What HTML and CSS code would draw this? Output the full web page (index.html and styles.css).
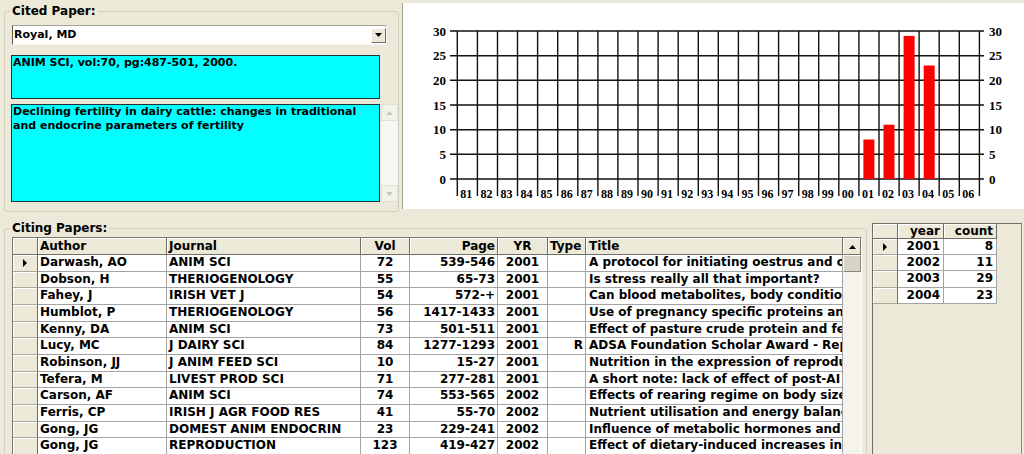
FILE: index.html
```html
<!DOCTYPE html>
<html>
<head>
<meta charset="utf-8">
<title>Citation Browser</title>
<link rel="stylesheet" href="styles.css">
</head>
<body>
<div class="top">
  <fieldset class="group cited">
    <legend>Cited Paper:</legend>
    <div class="combo">
      <span class="combo-text">Royal, MD</span>
      <span class="combo-btn"><svg width="7" height="4" viewBox="0 0 7 4"><polygon points="0,0 7,0 3.5,4" fill="#000"/></svg></span>
    </div>
    <div class="memo source">ANIM SCI, vol:70, pg:487-501, 2000.</div>
    <div class="memo-wrap">
      <div class="memo title">Declining fertility in dairy cattle: changes in traditional and endocrine parameters of fertility</div>
      <div class="vscroll off">
        <span class="sbtn"><svg width="7" height="4" viewBox="0 0 7 4"><polygon points="0,4 7,4 3.5,0" fill="#C9C7BA"/></svg></span>
        <span class="strack"></span>
        <span class="sbtn"><svg width="7" height="4" viewBox="0 0 7 4"><polygon points="0,0 7,0 3.5,4" fill="#C9C7BA"/></svg></span>
      </div>
    </div>
  </fieldset>
  <div class="chart">
    <svg width="621" height="206" viewBox="403 3 621 206" font-family="'Liberation Serif', serif" font-weight="bold" font-size="12">
      <path d="M450 179H984M450 154.3H984M450 129.7H984M450 105H984M450 80.3H984M450 55.7H984M450 31H984" stroke="#111" stroke-width="1.4" fill="none"/>
      <path d="M457.3 31V196M477.4 31V196M497.5 31V196M517.5 31V196M537.6 31V196M557.7 31V196M577.8 31V196M597.9 31V196M617.9 31V196M638 31V196M658.1 31V196M678.2 31V196M698.3 31V196M718.3 31V196M738.4 31V196M758.5 31V196M778.6 31V196M798.7 31V196M818.7 31V196M838.8 31V196M858.9 31V196M879 31V196M899.1 31V196M919.1 31V196M939.2 31V196M959.3 31V196M979.4 31V196" stroke="#111" stroke-width="1.4" fill="none"/>
      <g fill="#FF0000">
        <rect x="863.4" y="139.5" width="11" height="39.5"/>
        <rect x="883.5" y="124.7" width="11" height="54.3"/>
        <rect x="903.6" y="35.9" width="11" height="143.1"/>
        <rect x="923.7" y="65.5" width="11" height="113.5"/>
      </g>
      <g text-anchor="end" fill="#000" font-size="13">
        <text x="446" y="183.7">0</text>
        <text x="446" y="159">5</text>
        <text x="446" y="134.4">10</text>
        <text x="446" y="109.7">15</text>
        <text x="446" y="85">20</text>
        <text x="446" y="60.4">25</text>
        <text x="446" y="35.7">30</text>
      </g>
      <g text-anchor="start" fill="#000" font-size="13">
        <text x="989" y="183.7">0</text>
        <text x="989" y="159">5</text>
        <text x="989" y="134.4">10</text>
        <text x="989" y="109.7">15</text>
        <text x="989" y="85">20</text>
        <text x="989" y="60.4">25</text>
        <text x="989" y="35.7">30</text>
      </g>
      <g text-anchor="middle" fill="#000">
        <text x="466.3" y="197.5">81</text>
        <text x="486.4" y="197.5">82</text>
        <text x="506.5" y="197.5">83</text>
        <text x="526.5" y="197.5">84</text>
        <text x="546.6" y="197.5">85</text>
        <text x="566.7" y="197.5">86</text>
        <text x="586.8" y="197.5">87</text>
        <text x="606.9" y="197.5">88</text>
        <text x="626.9" y="197.5">89</text>
        <text x="647" y="197.5">90</text>
        <text x="667.1" y="197.5">91</text>
        <text x="687.2" y="197.5">92</text>
        <text x="707.3" y="197.5">93</text>
        <text x="727.3" y="197.5">94</text>
        <text x="747.4" y="197.5">95</text>
        <text x="767.5" y="197.5">96</text>
        <text x="787.6" y="197.5">97</text>
        <text x="807.7" y="197.5">98</text>
        <text x="827.7" y="197.5">99</text>
        <text x="847.8" y="197.5">00</text>
        <text x="867.9" y="197.5">01</text>
        <text x="888" y="197.5">02</text>
        <text x="908.1" y="197.5">03</text>
        <text x="928.1" y="197.5">04</text>
        <text x="948.2" y="197.5">05</text>
        <text x="968.3" y="197.5">06</text>
      </g>
    </svg>
  </div>
</div>

<div class="bottom">
  <fieldset class="group citing">
    <legend>Citing Papers:</legend>
    <div class="grid">
      <div class="cells">
        <div class="h"></div><div class="h">Author</div><div class="h">Journal</div><div class="h ctr">Vol</div><div class="h r">Page</div><div class="h ctr">YR</div><div class="h">Type</div><div class="h t">Title</div>

        <div class="ind"><span class="arrow"></span></div><div class="c">Darwash, AO</div><div class="c">ANIM SCI</div><div class="c ctr">72</div><div class="c r">539-546</div><div class="c ctr">2001</div><div class="c r"></div><div class="c t">A protocol for initiating oestrus and ovulation early post partum in dairy cows</div>
        <div class="ind"></div><div class="c">Dobson, H</div><div class="c">THERIOGENOLOGY</div><div class="c ctr">55</div><div class="c r">65-73</div><div class="c ctr">2001</div><div class="c r"></div><div class="c t">Is stress really all that important?</div>
        <div class="ind"></div><div class="c">Fahey, J</div><div class="c">IRISH VET J</div><div class="c ctr">54</div><div class="c r">572-+</div><div class="c ctr">2001</div><div class="c r"></div><div class="c t">Can blood metabolites, body condition score and milk yield predict fertility?</div>
        <div class="ind"></div><div class="c">Humblot, P</div><div class="c">THERIOGENOLOGY</div><div class="c ctr">56</div><div class="c r">1417-1433</div><div class="c ctr">2001</div><div class="c r"></div><div class="c t">Use of pregnancy specific proteins and progesterone assays</div>
        <div class="ind"></div><div class="c">Kenny, DA</div><div class="c">ANIM SCI</div><div class="c ctr">73</div><div class="c r">501-511</div><div class="c ctr">2001</div><div class="c r"></div><div class="c t">Effect of pasture crude protein and fermentable energy supply</div>
        <div class="ind"></div><div class="c">Lucy, MC</div><div class="c">J DAIRY SCI</div><div class="c ctr">84</div><div class="c r">1277-1293</div><div class="c ctr">2001</div><div class="c r">R</div><div class="c t">ADSA Foundation Scholar Award - Reproductive loss in high-producing dairy cattle</div>
        <div class="ind"></div><div class="c">Robinson, JJ</div><div class="c">J ANIM FEED SCI</div><div class="c ctr">10</div><div class="c r">15-27</div><div class="c ctr">2001</div><div class="c r"></div><div class="c t">Nutrition in the expression of reproductive performance</div>
        <div class="ind"></div><div class="c">Tefera, M</div><div class="c">LIVEST PROD SCI</div><div class="c ctr">71</div><div class="c r">277-281</div><div class="c ctr">2001</div><div class="c r"></div><div class="c t">A short note: lack of effect of post-AI progesterone</div>
        <div class="ind"></div><div class="c">Carson, AF</div><div class="c">ANIM SCI</div><div class="c ctr">74</div><div class="c r">553-565</div><div class="c ctr">2002</div><div class="c r"></div><div class="c t">Effects of rearing regime on body size and reproduction</div>
        <div class="ind"></div><div class="c">Ferris, CP</div><div class="c">IRISH J AGR FOOD RES</div><div class="c ctr">41</div><div class="c r">55-70</div><div class="c ctr">2002</div><div class="c r"></div><div class="c t">Nutrient utilisation and energy balance in dairy cows</div>
        <div class="ind"></div><div class="c">Gong, JG</div><div class="c">DOMEST ANIM ENDOCRIN</div><div class="c ctr">23</div><div class="c r">229-241</div><div class="c ctr">2002</div><div class="c r"></div><div class="c t">Influence of metabolic hormones and nutrition on ovarian follicle development</div>
        <div class="ind"></div><div class="c">Gong, JG</div><div class="c">REPRODUCTION</div><div class="c ctr">123</div><div class="c r">419-427</div><div class="c ctr">2002</div><div class="c r"></div><div class="c t">Effect of dietary-induced increases in circulating insulin</div>
      </div>
      <div class="vscroll gscroll">
        <span class="gbtn"><svg width="7" height="4" viewBox="0 0 7 4"><polygon points="0,4 7,4 3.5,0" fill="#000"/></svg></span>
        <span class="thumb"></span>
        <span class="strack"></span>
      </div>
    </div>
  </fieldset>

  <div class="mini">
    <div class="mini-cells">
      <div class="h"></div><div class="h r">year</div><div class="h r">count</div>
      <div class="ind"><span class="arrow"></span></div><div class="c r">2001</div><div class="c r">8</div>
      <div class="ind"></div><div class="c r">2002</div><div class="c r">11</div>
      <div class="ind"></div><div class="c r">2003</div><div class="c r">29</div>
      <div class="ind"></div><div class="c r">2004</div><div class="c r">23</div>
    </div>
  </div>
</div>
</body>
</html>
```

FILE: styles.css
```css
html, body {
  margin: 0;
  padding: 0;
}
body {
  width: 1024px;
  height: 454px;
  overflow: hidden;
  background: #ECE9D8;
  font-family: "DejaVu Sans", sans-serif;
  font-weight: bold;
  font-size: 12px;
  color: #000;
}

/* top area */
.top {
  display: flex;
  align-items: flex-start;
  height: 212px;
}

.group {
  box-sizing: border-box;
  min-width: 0;
  padding: 0 0 0 5px;
  border: 1px solid #D0D0BF;
  border-radius: 3px;
}
.group legend {
  padding: 0 2px;
  font-size: 12px;
  line-height: 17px;
}

.group.cited {
  margin: 3px 0 0 4px;
  width: 395px;
  height: 209px;
}

.combo {
  box-sizing: border-box;
  display: flex;
  align-items: center;
  margin: 5px 0 0 2px;
  width: 375px;
  height: 20px;
  background: #fff;
  border-style: solid;
  border-width: 1px;
  border-color: #A5A296 #F5F4EE #F5F4EE #5B5A52;
}
.combo-text {
  flex: 1;
  padding-left: 1px;
  font-size: 11px;
  line-height: 18px;
}
.combo-btn {
  box-sizing: border-box;
  display: flex;
  align-items: center;
  justify-content: center;
  width: 15px;
  height: 15px;
  background: #ECE9D8;
  border: 1px solid;
  border-color: #fff #716F64 #716F64 #fff;
}

.memo {
  box-sizing: border-box;
  background: #00FFFF;
  border: 1px solid #1E3434;
  padding: 0 1px;
  font-size: 11px;
  line-height: 14px;
  overflow: hidden;
}
.source {
  margin: 10px 0 0 1px;
  width: 369px;
  height: 44px;
}
.memo-wrap {
  display: flex;
  margin: 5px 0 0 1px;
  height: 98px;
}
.memo.title {
  width: 369px;
  height: 98px;
}

.vscroll {
  display: flex;
  flex-direction: column;
}
.vscroll.off {
  width: 17px;
  margin-left: 1px;
  background: #F7F6F2;
}
.sbtn {
  box-sizing: border-box;
  display: flex;
  align-items: center;
  justify-content: center;
  height: 17px;
  background: #F3F2EC;
  border: 1px solid #E2E0D4;
}
.strack {
  flex: 1;
}

.chart {
  box-sizing: border-box;
  margin: 3px 0 0 3px;
  width: 622px;
  height: 206px;
  background: #fff;
  border-left: 1px solid #A7A593;
}
.chart svg {
  display: block;
}

/* bottom area */
.bottom {
  display: flex;
  align-items: flex-start;
}
.group.citing {
  margin: 8px 0 0 4px;
  width: 863px;
  height: 250px;
}
.grid {
  box-sizing: border-box;
  display: flex;
  margin-left: 2px;
  width: 850px;
  border: 1px solid;
  border-color: #7A786C #fff #fff #7A786C;
  background: #fff;
}
.cells {
  display: grid;
  grid-template-columns: 25px 129px 194px 49px 88px 50px 38px 257px;
  grid-template-rows: 17px;
  grid-auto-rows: 16.67px;
}
.cells .c,
.mini-cells .c {
  background: #fff;
  border-right: 1px solid #A4A4A4;
  border-bottom: 1px solid #A4A4A4;
  padding: 0 2px;
  line-height: 15.67px;
  white-space: nowrap;
  overflow: hidden;
}
.h {
  background: #ECE9D8;
  border-right: 1px solid #716F64;
  border-bottom: 1px solid #716F64;
  box-shadow: inset 1px 1px 0 #fff;
  padding: 0 2px;
  line-height: 16px;
  white-space: nowrap;
  overflow: hidden;
}
.ind {
  display: flex;
  align-items: center;
  justify-content: center;
  background: #ECE9D8;
  border-right: 1px solid #716F64;
  border-bottom: 1px solid #ACA899;
  box-shadow: inset 1px 1px 0 #fff;
}
.arrow {
  width: 0;
  height: 0;
  border-left: 4px solid #000;
  border-top: 4px solid transparent;
  border-bottom: 4px solid transparent;
}
.r { text-align: right; }
.ctr { text-align: center; }
.cells .t { padding-left: 3px; }

.gscroll {
  width: 18px;
  background: #F4F3EE;
}
.gbtn {
  box-sizing: border-box;
  display: flex;
  align-items: center;
  justify-content: center;
  height: 17px;
  background: #ECE9D8;
  border: 1px solid;
  border-color: #fff #716F64 #716F64 #fff;
}
.thumb {
  box-sizing: border-box;
  height: 17px;
  background: #D8D5C6;
  border: 1px solid;
  border-color: #fff #8A887C #8A887C #fff;
}

.mini {
  box-sizing: border-box;
  margin: 11px 0 0 5px;
  width: 150px;
  height: 240px;
  background: #ECE9D8;
  border: 1px solid;
  border-color: #716F64 #8A887C #8A887C #716F64;
}
.mini-cells {
  display: grid;
  grid-template-columns: 25px 46px 53px;
  grid-template-rows: 15px;
  grid-auto-rows: 16.2px;
  width: 124px;
}
.mini-cells .h {
  line-height: 14px;
  padding: 0 3px 0 2px;
}
.mini-cells .c {
  line-height: 15.2px;
  padding: 0 3px 0 2px;
}
```
